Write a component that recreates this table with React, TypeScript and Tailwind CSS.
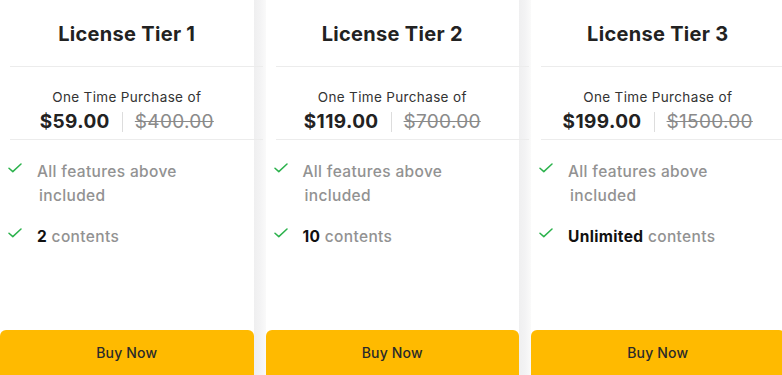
const tiers = [
  { name: 'License Tier 1', price: '$59.00', old: '$400.00', count: '2' },
  { name: 'License Tier 2', price: '$119.00', old: '$700.00', count: '10' },
  { name: 'License Tier 3', price: '$199.00', old: '$1500.00', count: 'Unlimited' },
];

function Check() {
  return (
    <svg width="14" height="10" viewBox="0 0 14 10" fill="none" className="-mt-[1px] shrink-0">
      <path d="M1 5.2 L4.8 8.6 L13 1" stroke="#2bb24c" strokeWidth="1.5" strokeLinecap="round" strokeLinejoin="round" />
    </svg>
  );
}

function TierCard({ tier }: { tier: (typeof tiers)[number] }) {
  return (
    <div className="relative flex h-[378px] w-[253.5px] shrink-0 flex-col bg-white">
      <div className="flex h-[66px] items-center justify-center pt-[2px]">
        <h2 className="text-[20px] font-bold tracking-[0.3px] text-[#222]">{tier.name}</h2>
      </div>
      <div className="ml-[10px] h-px w-[253px] bg-[#ececec]" />
      <div className="flex h-[72px] flex-col items-center pt-[22px]">
        <p className="text-[13.5px] leading-[17px] tracking-[0.35px] text-[#333]">One Time Purchase of</p>
        <div className="mt-[2px] flex items-center">
          <span className="text-[19px] font-bold tracking-[0.4px] text-[#222]">{tier.price}</span>
          <span className="mx-[12px] h-[20px] w-px bg-[#ddd]" />
          <span className="text-[19px] tracking-[0.3px] text-[#8a8a8a] line-through">{tier.old}</span>
        </div>
      </div>
      <div className="ml-[10px] h-px w-[253px] bg-[#ececec]" />
      <ul className="flex flex-col gap-[21px] pl-[8px] pr-[20px] pt-[24px] text-[15.5px] font-medium leading-[24px] tracking-[0.35px] text-[#929292]">
        <li className="flex items-start gap-[15px]">
          <Check />
          <span className="-mt-[4px]">
            All features above
            <br />
            <span className="ml-[2px]">included</span>
          </span>
        </li>
        <li className="flex items-start gap-[15px]">
          <Check />
          <span className="-mt-[4px]">
            <b className="font-bold text-[#111]">{tier.count}</b> contents
          </span>
        </li>
      </ul>
      <button className="mt-auto h-[48px] w-full rounded-t-[6px] bg-[#ffba00] pb-[4px] text-[14px] font-medium tracking-[0.2px] text-[#2a2a2a]">
        Buy Now
      </button>
    </div>
  );
}

export default function App() {
  return (
    <div
      className="flex h-[375px] w-[782px] overflow-hidden bg-white"
      style={{ fontFamily: 'Inter, "Open Sans", sans-serif' }}
    >
      {tiers.map((tier, i) => (
        <div key={tier.name} className="flex shrink-0">
          <TierCard tier={tier} />
          {i < tiers.length - 1 && (
            <div className="h-full w-[12px] shrink-0 bg-gradient-to-r from-[#efeff0] via-[#f3f3f4] to-[#fafafa]" />
          )}
        </div>
      ))}
    </div>
  );
}
